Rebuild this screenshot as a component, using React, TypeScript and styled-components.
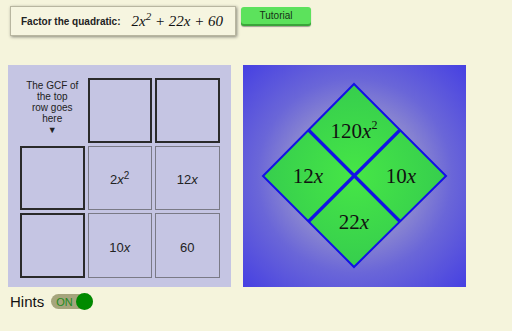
import React from 'react'
import styled, { createGlobalStyle } from 'styled-components'

const GlobalStyle = createGlobalStyle`
  html, body {
    margin: 0;
    padding: 0;
    background: #f5f4dc;
    font-family: 'Liberation Sans', Arial, sans-serif;
  }
`

const Page = styled.div`
  width: 512px;
  height: 331px;
  overflow: hidden;
  display: flex;
  flex-direction: column;
`

const TopBar = styled.div`
  display: flex;
  align-items: flex-start;
  gap: 5px;
  padding: 6px 0 0 10px;
`

const TaskBox = styled.div`
  width: 226px;
  height: 30px;
  box-sizing: border-box;
  display: flex;
  align-items: center;
  padding-left: 10px;
  white-space: nowrap;
  background: #f6f5e0;
  border: 1px solid #b8b6a0;
  box-shadow: 1px 1px 3px rgba(0, 0, 0, 0.45);
`

const TaskLabel = styled.span`
  font-size: 10px;
  font-weight: bold;
  color: #222;
  margin-right: 11px;
`

const Formula = styled.span`
  font-family: 'Liberation Serif', 'Times New Roman', serif;
  font-style: italic;
  font-size: 15px;
  color: #111;
  sup {
    font-size: 11px;
    vertical-align: 6px;
    line-height: 0;
  }
`

const TutorialButton = styled.button`
  margin-top: 1px;
  width: 70px;
  height: 19px;
  padding: 0 0 2px;
  border: none;
  border-radius: 3px;
  background: #5ce25c;
  box-shadow: inset 0 -2px 0 #3aa43a, 0 1px 1px rgba(0, 0, 0, 0.35);
  font-family: 'Liberation Sans', Arial, sans-serif;
  font-size: 10px;
  color: #163016;
`

const Main = styled.div`
  display: flex;
  gap: 12px;
  padding: 29px 0 0 8px;
`

const GridPanel = styled.div`
  width: 223px;
  height: 222px;
  box-sizing: border-box;
  padding: 13px 0 0 12px;
  background: #c5c5e3;
`

const Grid = styled.div`
  display: grid;
  grid-template-columns: repeat(3, 64.5px);
  grid-template-rows: repeat(3, 64.5px);
  gap: 3px;
`

const Cell = styled.div<{ $input?: boolean }>`
  box-sizing: border-box;
  display: flex;
  align-items: center;
  justify-content: center;
  border: ${({ $input }) => ($input ? '2px solid #2a2a2a' : '1px solid #7a7a86')};
  font-size: 13px;
  color: #222;
  padding-top: 4px;
`

const Term = styled.span`
  i {
    font-style: italic;
  }
  sup {
    font-size: 10px;
    vertical-align: 5px;
    line-height: 0;
  }
`

const GcfNote = styled.div`
  display: flex;
  flex-direction: column;
  align-items: center;
  padding-top: 2px;
  font-size: 10px;
  line-height: 11px;
  color: #222;
  text-align: center;
`

const Arrow = styled.span`
  font-size: 9px;
  line-height: 12px;
`

const DiamondPanel = styled.div`
  width: 223px;
  height: 222px;
  background: radial-gradient(circle at 50% 50%, #b4aec6 0%, #9c98cc 30%, #6a66d8 62%, #4640e2 100%);
`

const HintsRow = styled.div`
  display: flex;
  align-items: center;
  gap: 7px;
  padding: 6px 0 0 10px;
`

const HintsLabel = styled.span`
  font-size: 15px;
  color: #111;
`

const Toggle = styled.div`
  position: relative;
  width: 42px;
  height: 15px;
  border-radius: 8px;
  background: #a5a57c;
  display: flex;
  align-items: center;
  padding-left: 5px;
  box-sizing: border-box;
  font-size: 11px;
  color: #1e8a1e;
`

const Knob = styled.span`
  position: absolute;
  right: 0;
  top: -1px;
  width: 17px;
  height: 17px;
  border-radius: 50%;
  background: #008a00;
`

const Diamond: React.FC = () => {
  const serif = "'Liberation Serif', 'Times New Roman', serif"
  return (
    <svg width={223} height={222} viewBox="0 0 223 222">
      <defs>
        <radialGradient id="leaf" cx="50%" cy="50%" r="60%">
          <stop offset="0%" stopColor="#46e646" />
          <stop offset="100%" stopColor="#33c94f" />
        </radialGradient>
      </defs>
      <polygon
        points="111,19 203,111 111,202 20,111"
        fill="url(#leaf)"
        stroke="#1212e6"
        strokeWidth={2}
      />
      <line x1={65.5} y1={65} x2={157} y2={156.5} stroke="#1212e6" strokeWidth={3.2} />
      <line x1={157} y1={65} x2={65.5} y2={156.5} stroke="#1212e6" strokeWidth={3.2} />
      <g fontFamily={serif} fontSize={21} fill="#111" textAnchor="middle">
        <text x={111} y={73}>
          120<tspan fontStyle="italic">x</tspan>
          <tspan fontSize={12} dy={-9}>2</tspan>
        </text>
        <text x={65} y={118}>
          12<tspan fontStyle="italic">x</tspan>
        </text>
        <text x={158} y={118}>
          10<tspan fontStyle="italic">x</tspan>
        </text>
        <text x={111} y={164}>
          22<tspan fontStyle="italic">x</tspan>
        </text>
      </g>
    </svg>
  )
}

const App: React.FC = () => {
  return (
    <Page>
      <GlobalStyle />
      <TopBar>
        <TaskBox>
          <TaskLabel>Factor the quadratic:</TaskLabel>
          <Formula>
            2x<sup>2</sup> + 22x + 60
          </Formula>
        </TaskBox>
        <TutorialButton>Tutorial</TutorialButton>
      </TopBar>

      <Main>
        <GridPanel>
          <Grid>
            <GcfNote>
              The GCF of
              <br />
              the top
              <br />
              row goes
              <br />
              here
              <Arrow>▼</Arrow>
            </GcfNote>
            <Cell $input />
            <Cell $input />
            <Cell $input />
            <Cell>
              <Term>
                2<i>x</i>
                <sup>2</sup>
              </Term>
            </Cell>
            <Cell>
              <Term>
                12<i>x</i>
              </Term>
            </Cell>
            <Cell $input />
            <Cell>
              <Term>
                10<i>x</i>
              </Term>
            </Cell>
            <Cell>
              <Term>60</Term>
            </Cell>
          </Grid>
        </GridPanel>
        <DiamondPanel>
          <Diamond />
        </DiamondPanel>
      </Main>

      <HintsRow>
        <HintsLabel>Hints</HintsLabel>
        <Toggle>
          ON
          <Knob />
        </Toggle>
      </HintsRow>
    </Page>
  )
}

export default App
